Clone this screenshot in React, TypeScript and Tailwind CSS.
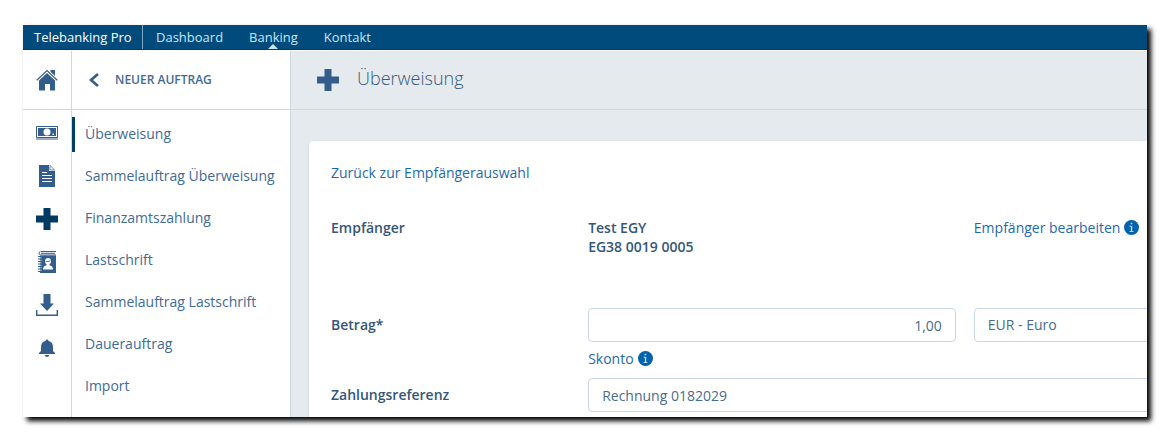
import { useState, type ReactNode } from 'react';

const navLinks = ['Dashboard', 'Banking', 'Kontakt'];

const menuItems = [
    'Überweisung',
    'Sammelauftrag Überweisung',
    'Finanzamtszahlung',
    'Lastschrift',
    'Sammelauftrag Lastschrift',
    'Dauerauftrag',
    'Import'
];

function Icon({ children, className = '' }: { children: ReactNode; className?: string }) {
    return (
        <svg
            viewBox="0 0 22 22"
            className={`w-[22px] h-[22px] shrink-0 ${className}`}
            fill="currentColor"
            aria-hidden="true"
        >
            {children}
        </svg>
    );
}

function HomeIcon() {
    return (
        <Icon>
            <path d="M14.500 1H19v6l-4.500-4z" />
            <path d="M11 4 19 11.500V21.500h-5V15H9v6.500H3v-10z" />
            <path d="M.8 11.200 11 1.600l10.200 9.600" fill="none" stroke="#fff" strokeWidth="2.800" />
            <path d="M.8 11.200 11 1.600l10.200 9.600" fill="none" stroke="currentColor" strokeWidth="1.200" />
        </Icon>
    );
}

function MoneyIcon() {
    return (
        <Icon>
            <path d="M.5 4.500h21v11H.5z" fill="none" stroke="currentColor" />
            <path d="M2 6h18v8H2z" />
            <circle cx="11" cy="10" r="3.500" fill="#fff" />
            <path d="M16.500 11.500H18V13h-1.500z" fill="#fff" />
            <path d="M0 16h22v2H0z" opacity=".5" />
        </Icon>
    );
}

function DocumentIcon() {
    return (
        <Icon>
            <path d="M3 0h10v6h6v16H3z" />
            <path d="M14 .5 18.600 5H14z" fill="#fff" stroke="currentColor" strokeWidth=".7" />
            <path d="M6 7.500h5M6 10.500h10M6 13.500h10M6 16.500h10" stroke="#fff" strokeWidth="1.200" />
        </Icon>
    );
}

function PlusIcon({ className = '' }: { className?: string }) {
    return (
        <Icon className={className}>
            <path d="M7.500 0h7v7.500H22v7h-7.500V22h-7v-7.500H0v-7h7.500z" />
        </Icon>
    );
}

function ContactsIcon() {
    return (
        <Icon>
            <path d="M5 .5h15M4.500 .5a1.800 1.800 0 0 0 0 3.500H20M5 2.300h14" fill="none" stroke="currentColor" />
            <path d="M4 4.500h16V22H4z" />
            <path d="M2 5.500h3M2 8h3M2 10.500h3M2 13h3M2 15.500h3M2 18h3M2 20.500h3" stroke="currentColor" />
            <path d="M4.200 6.800h1.300M4.200 9.300h1.300M4.200 11.800h1.300M4.200 14.300h1.300M4.200 16.800h1.300M4.200 19.300h1.300" stroke="#fff" strokeWidth=".8" />
            <path d="M12 7c2 0 3 1.400 3 3.200 0 1.300-.6 2.300-1.500 2.900v1.200c2 .5 3.500 1.500 3.500 4.200H7c0-2.700 1.500-3.700 3.500-4.200v-1.200C9.600 12.500 9 11.500 9 10.200 9 8.400 10 7 12 7z" fill="#fff" />
            <path d="M9.500 10.600c2 .2 3.500-.2 5-.9" fill="none" stroke="currentColor" strokeWidth=".8" />
        </Icon>
    );
}

function DownloadIcon() {
    return (
        <Icon>
            <path d="M7.500 0h7v9.500H18L11 17 4 9.500h3.500z" />
            <path d="M.7 16v5.200h20.600V16" fill="none" stroke="currentColor" strokeWidth="1.400" />
        </Icon>
    );
}

function BellIcon() {
    return (
        <Icon>
            <path d="M11 2.500c.8 0 1.300.5 1.300 1.200C15.600 4.500 17 7 17 10v4l2 2v1H3v-1l2-2v-4c0-3 1.400-5.500 4.700-6.300 0-.7.500-1.200 1.300-1.200zM8.700 18h4.600c-.2 1.200-1.200 2-2.300 2s-2.100-.8-2.300-2z" />
        </Icon>
    );
}

function InfoIcon() {
    return (
        <svg viewBox="0 0 14 14" className="w-[15px] h-[15px] shrink-0" aria-hidden="true">
            <circle cx="7" cy="7" r="7" fill="#0061ad" />
            <path d="M6.200 2.500h1.600V4H6.200zM5.200 5.300h2.500v4.900h1.100v1H5.200v-1h1.200V6.300H5.200z" fill="#b9d9f0" />
        </svg>
    );
}

const iconLinks = [
    { name: 'Zahlungen', icon: <MoneyIcon /> },
    { name: 'Dokumente', icon: <DocumentIcon /> },
    { name: 'Neuer Auftrag', icon: <PlusIcon className="text-[#003a63]" /> },
    { name: 'Kontakte', icon: <ContactsIcon /> },
    { name: 'Downloads', icon: <DownloadIcon /> },
    { name: 'Benachrichtigungen', icon: <BellIcon /> }
];

function TopBar() {
    return (
        <nav className="flex h-[25px] shrink-0 bg-[#004a7c] border-b border-[#003a6b] text-[13px] leading-6 text-[#c5e8fb]">
            <a href="#" className="px-[11px] w-[120px] whitespace-nowrap text-white border-r border-[#7fa5bf]">
                Telebanking Pro
            </a>
            {navLinks.map((item) => (
                <a key={item} href="#" className="relative mx-[13px]">
                    {item}
                    {item === 'Banking' && (
                        <span className="absolute bottom-0 left-1/2 -translate-x-1/2 border-x-[5px] border-b-[5px] border-x-transparent border-b-[#c5e8fb]" />
                    )}
                </a>
            ))}
        </nav>
    );
}

function IconBar() {
    return (
        <aside className="w-[49px] shrink-0 bg-white border-r border-[#ccd8e4] text-[#335d8a]">
            <a href="#" aria-label="Startseite" className="flex h-[59px] items-center justify-center border-b border-[#ccd8e4]">
                <HomeIcon />
            </a>
            <div className="flex flex-col pt-px">
                {iconLinks.map((item) => (
                    <a key={item.name} href="#" aria-label={item.name} className="flex h-[43px] items-center justify-center">
                        {item.icon}
                    </a>
                ))}
            </div>
        </aside>
    );
}

function SideMenu() {
    return (
        <aside className="w-[219px] shrink-0 bg-white border-r border-[#ccd8e4] text-[#416b95]">
            <button
                type="button"
                className="flex w-full h-[59px] items-center gap-[15px] pl-4 border-b border-[#ccd8e4] text-xs font-semibold"
            >
                <svg viewBox="0 0 12 14" className="w-3 h-[14px]" fill="none" stroke="#335d8a" strokeWidth="2.600" aria-hidden="true">
                    <path d="M10 1 3 7l7 6" />
                </svg>
                NEUER AUFTRAG
            </button>
            <ul className="pt-[3px]">
                {menuItems.map((item, idx) => (
                    <li key={item} className="flex h-[42px] items-center">
                        <a
                            href="#"
                            className={`flex h-[35px] items-center border-l-[3px] pl-[10px] ${
                                idx === 0 ? 'border-[#003f66]' : 'border-transparent'
                            }`}
                        >
                            {item}
                        </a>
                    </li>
                ))}
            </ul>
        </aside>
    );
}

const fieldClass = 'block w-full h-[34px] rounded border border-[#cbd7e4] bg-white px-[13px] text-sm text-[#4b6b8b]';
const rowClass = 'grid grid-cols-[2fr_3fr_2fr]';

function TransferForm() {
    const [amount, setAmount] = useState('1,00');
    const [currency, setCurrency] = useState('EUR');
    const [reference, setReference] = useState('Rechnung 0182029');

    return (
        <form className="mt-[31px] ml-[18px] -mr-[106px] rounded bg-white shadow-sm px-[22px] pt-[22px] pb-8 leading-[19px]">
            <a href="#" className="text-[#1f69ad]">
                Zurück zur Empfängerauswahl
            </a>
            <div className={`${rowClass} mt-9`}>
                <span className="font-semibold">Empfänger</span>
                <div className="font-semibold">
                    <p>Test EGY</p>
                    <p>EG38 0019 0005</p>
                </div>
                <a href="#" className="flex items-center self-start gap-1 whitespace-nowrap text-[#1f69ad]">
                    Empfänger bearbeiten
                    <InfoIcon />
                </a>
            </div>
            <div className={`${rowClass} mt-[52px]`}>
                <label htmlFor="amount" className="pt-[7px] font-semibold">
                    Betrag*
                </label>
                <div className="pr-[18px]">
                    <input
                        id="amount"
                        value={amount}
                        onChange={(e) => setAmount(e.target.value)}
                        className={`${fieldClass} text-right`}
                    />
                    <a href="#" className="mt-[7px] flex w-fit items-center gap-1 text-[#1f69ad]">
                        Skonto
                        <InfoIcon />
                    </a>
                </div>
                <select
                    aria-label="Währung"
                    value={currency}
                    onChange={(e) => setCurrency(e.target.value)}
                    className={`${fieldClass} appearance-none`}
                >
                    <option value="EUR">EUR - Euro</option>
                </select>
            </div>
            <div className={`${rowClass} mt-[10px]`}>
                <label htmlFor="reference" className="pt-[7px] font-semibold">
                    Zahlungsreferenz
                </label>
                <div className="col-span-2">
                    <input
                        id="reference"
                        value={reference}
                        onChange={(e) => setReference(e.target.value)}
                        className={fieldClass}
                    />
                </div>
            </div>
        </form>
    );
}

export default function App() {
    return (
        <div className="flex h-screen bg-white px-[23px] pt-[25px] pb-6 text-sm text-[#355779] font-['Open_Sans','Noto_Sans',sans-serif]">
            <div className="flex flex-1 min-w-0 flex-col overflow-hidden shadow-[4px_4px_5px_0_#000]">
                <TopBar />
                <div className="flex flex-1 min-h-0 border-t border-white bg-[#e5eaee]">
                    <IconBar />
                    <SideMenu />
                    <main className="flex-1 min-w-0 overflow-hidden">
                        <header className="flex h-[59px] items-center gap-[18px] border-b border-[#ccd8e4] pl-[26px]">
                            <PlusIcon className="text-[#335d8a]" />
                            <h1 className="pb-1 text-lg font-light">Überweisung</h1>
                        </header>
                        <TransferForm />
                    </main>
                </div>
            </div>
        </div>
    );
}
